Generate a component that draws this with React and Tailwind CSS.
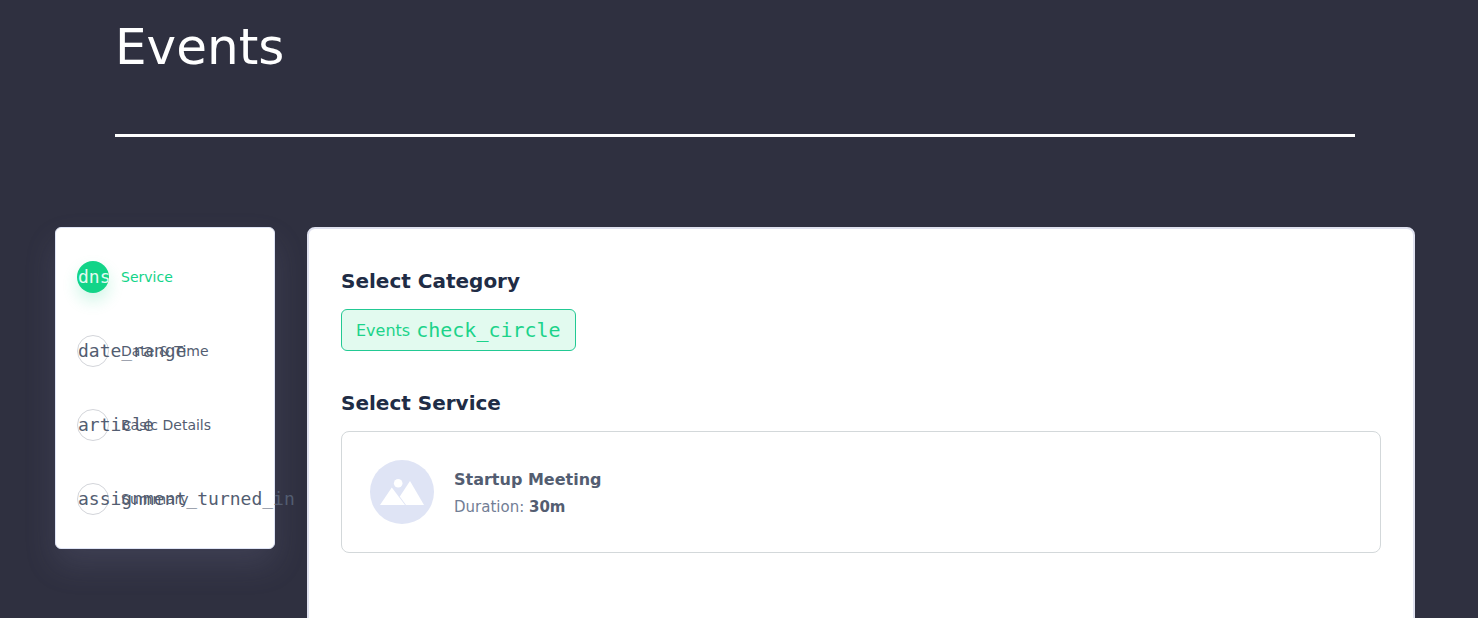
const steps = [
  { icon: "dns", label: "Service", active: true },
  { icon: "date_range", label: "Date & Time" },
  { icon: "article", label: "Basic Details" },
  { icon: "assignment_turned_in", label: "Summary" },
];

function Step({ icon, label, active }) {
  return (
    <li className="flex h-8 items-center gap-3">
      <span
        className={
          active
            ? "flex h-8 w-8 shrink-0 items-center overflow-hidden rounded-full bg-[#12d488] pl-px font-['DejaVu_Sans_Mono',monospace] text-[18px] leading-none text-[#e4fbf2] shadow-[0_8px_16px_rgba(18,212,136,0.2)]"
            : "flex h-8 w-8 shrink-0 items-center rounded-full border border-[#d3d5da] font-['DejaVu_Sans_Mono',monospace] text-[18px] leading-none text-[#535d71]"
        }
      >
        {icon}
      </span>
      <span
        className={
          active
            ? "text-sm whitespace-nowrap text-[#12d488]"
            : "text-sm whitespace-nowrap text-[#535d71]"
        }
      >
        {label}
      </span>
    </li>
  );
}

function Placeholder() {
  return (
    <svg className="h-16 w-16 shrink-0" viewBox="0 0 64 64">
      <circle cx="32" cy="32" r="32" fill="#dfe4f5" />
      <circle cx="28.2" cy="23.2" r="4.3" fill="#fff" />
      <path d="M10 45 21.8 27.5 35 45Z" fill="#fff" />
      <path d="M29.8 36.6 40 21 54 45H36Z" fill="#fff" />
    </svg>
  );
}

export default function App() {
  return (
    <div className="h-[618px] overflow-hidden bg-[#2f3040] font-['DejaVu_Sans',sans-serif]">
      <header className="ml-[115px] h-[137px] w-[1240px] border-b-3 border-white pt-[17px]">
        <h1 className="text-[50px] leading-[60px] text-white">Events</h1>
      </header>
      <main className="mt-[90px] ml-[55px] flex w-[1360px] items-start gap-8">
        <ul className="flex h-[322px] w-[220px] shrink-0 flex-col gap-[42px] rounded-md border border-[#dfe4f5] bg-white px-[21px] pt-[33px] shadow-[0_16px_32px_rgba(140,145,180,0.16)]">
          {steps.map((step) => (
            <Step key={step.icon} {...step} />
          ))}
        </ul>
        <section className="h-[460px] min-w-0 flex-1 rounded-lg border-2 border-[#dfe1ef] bg-white px-8 pt-9">
          <h2 className="text-xl leading-8 font-bold text-[#202c45]">Select Category</h2>
          <button className="mt-3 flex h-[42px] w-[235px] items-center gap-1.5 rounded-md border border-[#22c993] bg-[#e2faef] pl-3.5 text-[#1bd38a]">
            <span className="pt-0.5 text-base">Events</span>
            <span className="font-['DejaVu_Sans_Mono',monospace] text-[20px] leading-none">check_circle</span>
          </button>
          <h2 className="mt-9 text-xl leading-8 font-bold text-[#202c45]">Select Service</h2>
          <article className="mt-3 flex h-[122px] items-center gap-5 rounded-lg border border-[#d3d8da] px-7">
            <Placeholder />
            <div className="pt-0.5">
              <h3 className="pb-px text-base leading-[27px] font-bold text-[#535d71]">Startup Meeting</h3>
              <p className="text-[15px] leading-[27px] text-[#727e95]">
                Duration: <b className="font-bold text-[#535d71]">30m</b>
              </p>
            </div>
          </article>
        </section>
      </main>
    </div>
  );
}
